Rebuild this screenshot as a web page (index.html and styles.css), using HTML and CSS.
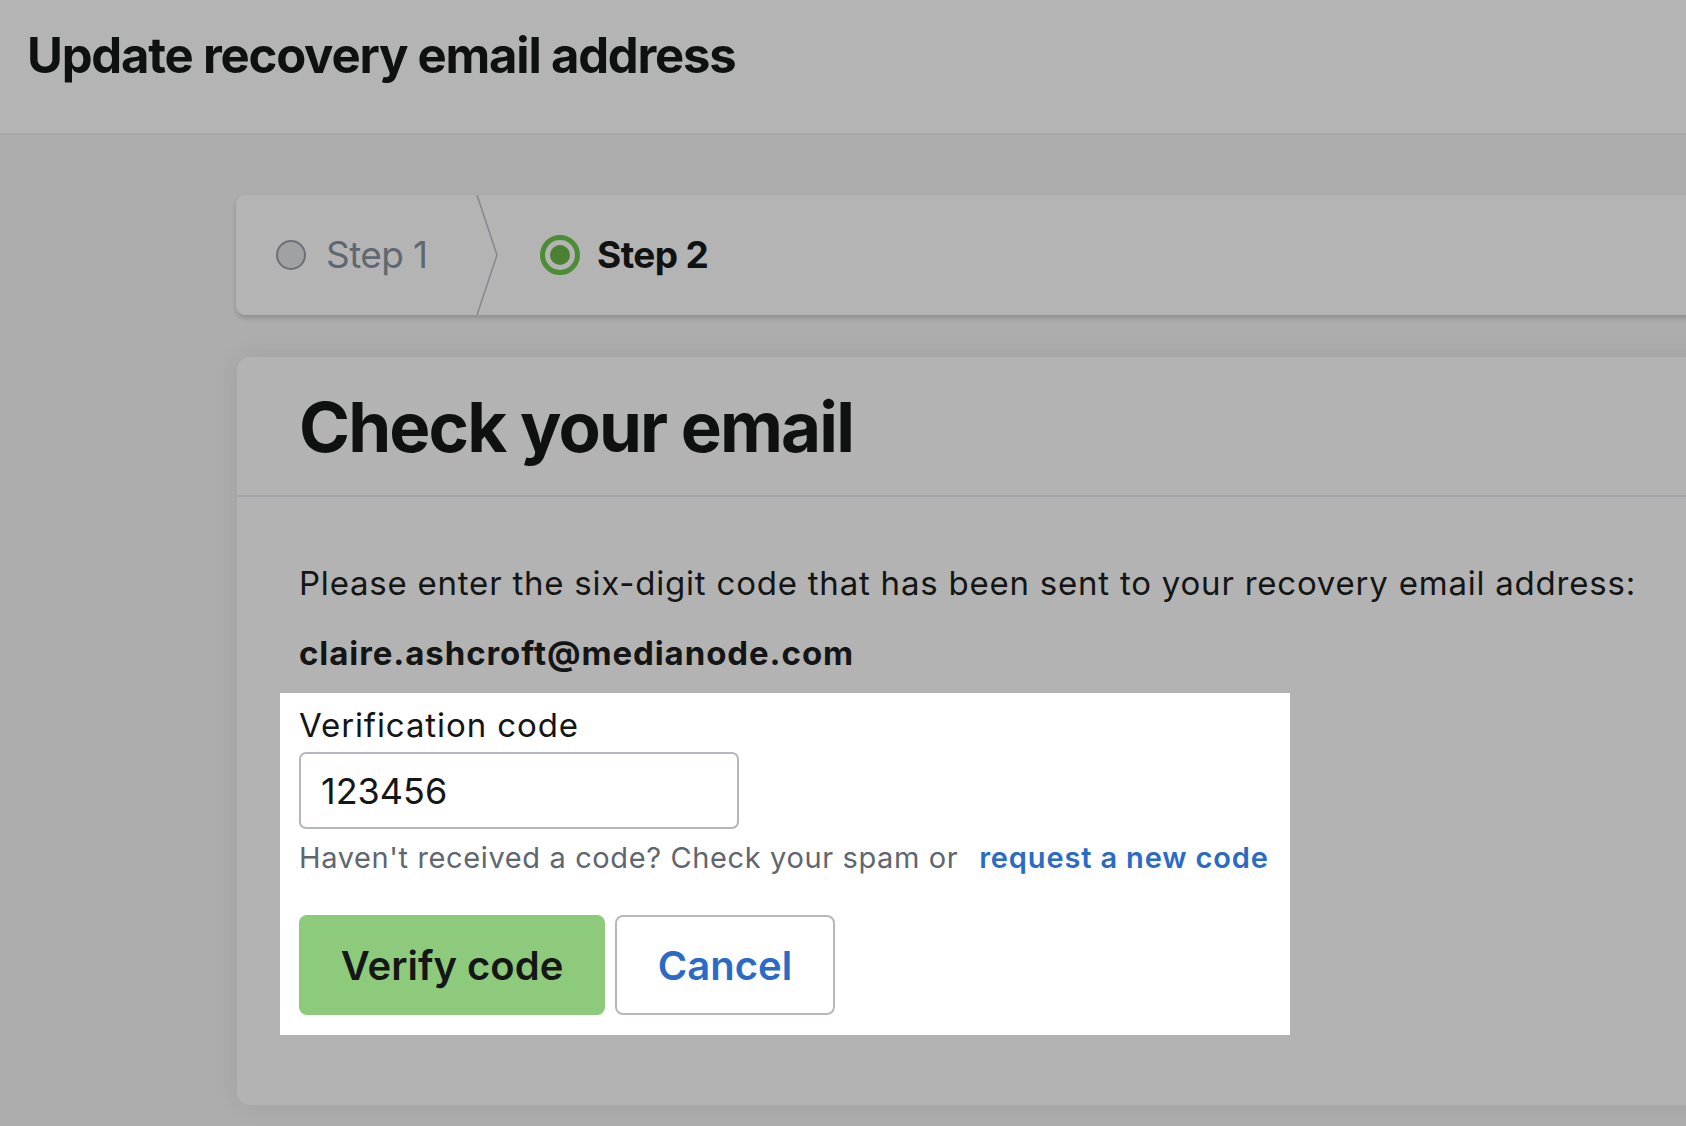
FILE: index.html
```html
<!DOCTYPE html>
<html lang="en">
<head>
<meta charset="utf-8">
<title>Update recovery email address</title>
<link rel="stylesheet" href="styles.css">
</head>
<body>
<header class="page-header">
  <h1 class="page-title">Update recovery email address</h1>
</header>
<main class="main">
  <nav class="steps">
    <div class="step step-done">
      <span class="step-dot"></span>
      <span class="step-label">Step 1</span>
    </div>
    <svg class="step-sep" width="24" height="120" viewBox="0 0 24 120" aria-hidden="true">
      <polyline points="1,0 21,60 1,120" fill="none" stroke="#868a90" stroke-width="1.6"/>
    </svg>
    <div class="step step-current">
      <span class="step-ring"><span class="step-ring-dot"></span></span>
      <span class="step-label">Step 2</span>
    </div>
  </nav>
  <section class="card">
    <div class="card-head">
      <h2 class="card-title">Check your email</h2>
    </div>
    <div class="card-body">
      <p class="intro">Please enter the six-digit code that has been sent to your recovery email address:</p>
      <p class="email">claire.ashcroft@medianode.com</p>
      <div class="spotlight">
        <label class="field-label" for="code">Verification code</label>
        <input class="field-input" id="code" type="text" value="123456">
        <p class="help">Haven't received a code? Check your spam or <a class="help-link" href="#">request a new code</a></p>
        <div class="actions">
          <button class="btn btn-primary" type="button">Verify code</button>
          <button class="btn btn-secondary" type="button">Cancel</button>
        </div>
      </div>
    </div>
  </section>
</main>
</body>
</html>
```
FILE: styles.css
```css
html, body {
  margin: 0;
  padding: 0;
  overflow: hidden;
}
body {
  background: #adadad;
  font-family: "Inter", "Lato", "Liberation Sans", sans-serif;
  color: #121313;
  height: 1126px;
}
.page-header {
  background: #b4b4b4;
  height: 133px;
  border-bottom: 2px solid #a6a6ab;
  box-sizing: content-box;
  padding: 0 27px;
}
.page-title {
  margin: 0;
  padding-top: 31px;
  font-size: 49px;
  line-height: 50px;
  font-weight: 700;
  letter-spacing: -1.2px;
  color: #0f1111;
}
.main {
  padding-left: 236px;
  padding-top: 60px;
}
.steps {
  display: flex;
  align-items: center;
  height: 120px;
  width: 1500px;
  background: #b4b4b4;
  border-radius: 9px 0 0 9px;
  box-shadow: 0 3px 5px rgba(0, 0, 0, 0.18);
  padding-left: 40px;
  box-sizing: border-box;
}
.step {
  display: flex;
  align-items: center;
}
.step-done {
  width: 200px;
  gap: 20px;
}
.step-current {
  gap: 17px;
}
.step-dot {
  width: 26px;
  height: 26px;
  border-radius: 50%;
  background: #a0a1a5;
  border: 2px solid #6a7077;
}
.step-ring {
  width: 40px;
  height: 40px;
  box-sizing: border-box;
  border-radius: 50%;
  border: 5px solid #4e8b36;
  display: flex;
  align-items: center;
  justify-content: center;
}
.step-ring-dot {
  width: 20px;
  height: 20px;
  border-radius: 50%;
  background: #4a8133;
}
.step-label {
  font-size: 37px;
  line-height: 38px;
  letter-spacing: -0.6px;
}
.step-done .step-label {
  color: #5f6870;
}
.step-current .step-label {
  font-weight: 700;
  color: #111212;
}
.step-sep {
  display: block;
  flex: none;
  margin-right: 40px;
}
.card {
  margin-top: 42px;
  margin-left: 1px;
  width: 1500px;
  background: #b3b3b3;
  border-radius: 13px 0 0 13px;
  box-shadow: 0 0 28px rgba(0, 0, 0, 0.07);
}
.card-head {
  height: 140px;
  box-sizing: border-box;
  padding: 35px 0 0 62px;
  border-bottom: 2px solid #a4a4a9;
}
.card-title {
  margin: 0;
  font-size: 69px;
  line-height: 71px;
  font-weight: 700;
  letter-spacing: -1.85px;
  color: #0f1111;
}
.card-body {
  padding: 66px 0 70px 62px;
}
.intro {
  margin: 0;
  font-size: 33px;
  line-height: 40px;
  letter-spacing: 0.78px;
  color: #141515;
}
.email {
  margin: 30px 0 0;
  font-size: 33px;
  line-height: 40px;
  font-weight: 700;
  letter-spacing: 0.92px;
  color: #141515;
}
.spotlight {
  margin: 20px 0 0 -19px;
  width: 1010px;
  box-sizing: border-box;
  background: #ffffff;
  padding: 12px 19px 20px;
}
.field-label {
  display: block;
  font-size: 33px;
  line-height: 40px;
  letter-spacing: 0.9px;
  color: #141515;
}
.field-input {
  display: block;
  margin-top: 7px;
  width: 440px;
  height: 77px;
  box-sizing: border-box;
  border: 2px solid #b4b8be;
  border-radius: 7px;
  padding: 0 20px;
  font-family: inherit;
  font-size: 36px;
  color: #151616;
  background: #ffffff;
  outline: none;
}
.help {
  margin: 11px 0 0;
  font-size: 29px;
  line-height: 36px;
  letter-spacing: 0.62px;
  color: #5e6670;
}
.help-link {
  margin-left: 12px;
  color: #2b6bc5;
  font-weight: 600;
  letter-spacing: 0.85px;
  text-decoration: none;
}
.actions {
  display: flex;
  gap: 10px;
  margin-top: 39px;
}
.btn {
  height: 100px;
  box-sizing: border-box;
  border-radius: 8px;
  font-family: inherit;
  font-size: 40px;
  font-weight: 600;
  padding: 0;
  cursor: pointer;
}
.btn-primary {
  width: 306px;
  background: #8dca7b;
  border: none;
  color: #151616;
}
.btn-secondary {
  width: 220px;
  background: #ffffff;
  border: 2px solid #b5b9bf;
  color: #2b6bc5;
}
```
